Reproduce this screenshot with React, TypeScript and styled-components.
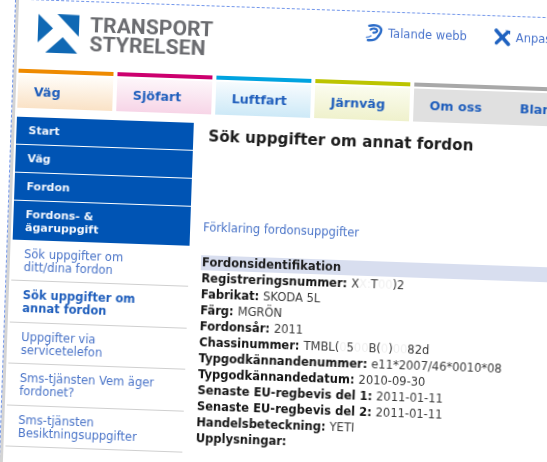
import React from "react";
import styled, { createGlobalStyle } from "styled-components";

const Global = createGlobalStyle`
  html, body { margin: 0; padding: 0; background: #fff; overflow: hidden; }
  body { width: 547px; height: 462px; font-family: "DejaVu Sans", Verdana, sans-serif; }
`;

const Viewport = styled.div`
  width: 547px;
  height: 462px;
  overflow: hidden;
  position: relative;
  background: #fff;
`;

const Tilted = styled.div`
  width: 620px;
  height: 560px;
  box-sizing: border-box;
  margin-top: -2px;
  margin-left: 16px;
  position: relative;
  transform-origin: -16px 2px;
  transform: rotate(2deg);
  filter: blur(0.45px);
  background: #fff;
  border-left: 3px solid #d4d4d4;
  border-top: 1px dashed #6f94ea;
  padding-left: 2px;
  &::before {
    content: "";
    position: absolute;
    left: -4px;
    top: 0;
    bottom: 0;
    border-left: 1px dashed #6f94ea;
  }
`;

const Header = styled.header`
  height: 69px;
  position: relative;
  display: flex;
  align-items: flex-start;
`;

const LogoBlock = styled.div`
  display: flex;
  align-items: flex-start;
  gap: 10px;
  padding: 13px 0 0 18px;
  width: 345px;
  box-sizing: border-box;
`;

const LogoWord = styled.div`
  font-family: Roboto, "Liberation Sans", Arial, sans-serif;
  font-weight: 700;
  font-size: 21px;
  line-height: 19px;
  letter-spacing: 0.1px;
  color: #6b6c70;
  padding-top: 1px;
`;

const ToolLinks = styled.nav`
  display: flex;
  gap: 26px;
  padding-top: 12px;
  white-space: nowrap;
`;

const ToolLink = styled.span`
  display: inline-flex;
  align-items: center;
  gap: 5px;
  font-size: 11.5px;
  color: #4a74cc;
`;

const Tabs = styled.div`
  display: flex;
  gap: 4px;
  height: 39px;
`;

const Tab = styled.div<{ $bar: string; $fill: string; $wide?: boolean }>`
  width: ${(p) => (p.$wide ? "260px" : "95px")};
  flex: none;
  display: flex;
  flex-direction: column;
  gap: 2px;
  &::before {
    content: "";
    height: 4px;
    background: ${(p) => p.$bar};
  }
  & > div {
    flex: 1;
    display: flex;
    gap: 38px;
    align-items: center;
    padding-left: 16px;
    font-size: 12.7px;
    font-weight: 700;
    color: #1f5ebc;
    background: ${(p) => p.$fill};
  }
`;

const Body = styled.div`
  display: flex;
  margin-top: 9px;
`;

const Sidebar = styled.aside`
  width: 177px;
  flex: none;
`;

const MainNav = styled.div`
  display: flex;
  flex-direction: column;
  gap: 1px;
`;

const MainItem = styled.div<{ $double?: boolean }>`
  background: #0054b4;
  color: #f2f6fc;
  font-weight: 700;
  font-size: 11px;
  line-height: ${(p) => (p.$double ? "13px" : "14px")};
  padding: 7px 12px 6px;
`;

const SubItem = styled.div<{ $active?: boolean }>`
  height: 41.4px;
  box-sizing: border-box;
  padding: 8px 6px 0 12px;
  border-bottom: 1px solid #cfcfcf;
  font-size: 11.5px;
  line-height: 13px;
  color: ${(p) => (p.$active ? "#1f5ebc" : "#4a74c8")};
  font-weight: ${(p) => (p.$active ? 700 : 400)};
`;

const Main = styled.main`
  margin-left: 15px;
  flex: 1;
`;

const Title = styled.h1`
  margin: 3px 0 0;
  font-size: 15.2px;
  line-height: 20px;
  font-weight: 700;
  color: #1c1c1c;
`;

const Explain = styled.a`
  display: block;
  margin-top: 74px;
  margin-left: -2px;
  font-size: 11.45px;
  line-height: 14px;
  color: #4a74c8;
`;

const Section = styled.div`
  margin: 21px 0 0 -3px;
  background: #d8deef;
  height: 15px;
  font-size: 11.5px;
  line-height: 15px;
  font-weight: 700;
  color: #1c1c1c;
  padding-left: 1px;
`;

const Row = styled.div`
  height: 16px;
  font-size: 11.5px;
  line-height: 16px;
  color: #3a3a3a;
  margin-left: -3px;
  padding-left: 1px;
  white-space: nowrap;
  & b {
    color: #141414;
    margin-right: 4px;
  }
`;

const Faint = styled.span`
  color: #f0f0f0;
`;

const EarIcon = () => (
  <svg width="18" height="18" viewBox="0 0 18 18" fill="none">
    <path d="M4 1.8C8 .8 14 .8 15.8 4.5c1.4 3.5-1.6 5.8-3 8.2-1.3 2.4-4.5 3.8-9.8 3.6" stroke="#2a6bc8" strokeWidth="2.4" strokeLinecap="round" />
    <path d="M5.5 5.5c2-1.5 6-1.3 6.5.8.3 1.7-1.6 2.4-3.6 2.4" stroke="#2a6bc8" strokeWidth="2.2" strokeLinecap="round" />
    <path d="M1.5 13.5c1.5-.2 3-.6 4.5-1.5" stroke="#6e9ae0" strokeWidth="1.5" strokeLinecap="round" />
  </svg>
);

const ToolIcon = () => (
  <svg width="18" height="18" viewBox="0 0 18 18" fill="none">
    <path d="M3 2l12.5 13.5" stroke="#1f62c0" strokeWidth="3.6" strokeLinecap="round" />
    <path d="M14.5 3.5l-11 11" stroke="#1f62c0" strokeWidth="3.2" strokeLinecap="round" />
    <path d="M12 1.5l5 .5v4z" fill="#1f62c0" />
  </svg>
);

const LogoMark = () => (
  <svg width="42" height="40" viewBox="0 0 42 40" style={{ flex: "none" }}>
    <path d="M0 0.5L15 14.5L0 29Z" fill="#0f68b4" />
    <path d="M19 0L41 0.5V22Z" fill="#0f68b4" />
    <path d="M8 39L25 23L40 39Z" fill="#0f68b4" />
  </svg>
);

const rows: [string, React.ReactNode][] = [
  ["Registreringsnummer:", <>X<Faint>X:</Faint>T<Faint>00</Faint>)2</>],
  ["Fabrikat:", "SKODA 5L"],
  ["Färg:", "MGRÖN"],
  ["Fordonsår:", "2011"],
  ["Chassinummer:", <>TMBL(<Faint>0</Faint>5<Faint>00</Faint>B(<Faint>0</Faint>)<Faint>00</Faint>82d</>],
  ["Typgodkännandenummer:", "e11*2007/46*0010*08"],
  ["Typgodkännandedatum:", "2010-09-30"],
  ["Senaste EU-regbevis del 1:", "2011-01-11"],
  ["Senaste EU-regbevis del 2:", "2011-01-11"],
  ["Handelsbeteckning:", "YETI"],
  ["Upplysningar:", ""],
];

export default function App() {
  return (
    <Viewport>
      <Global />
      <Tilted>
        <Header>
          <LogoBlock>
            <LogoMark />
            <LogoWord>TRANSPORT<br />STYRELSEN</LogoWord>
          </LogoBlock>
          <ToolLinks>
            <ToolLink><EarIcon />Talande webb</ToolLink>
            <ToolLink><ToolIcon />Anpassa webben</ToolLink>
          </ToolLinks>
        </Header>
        <Tabs>
          <Tab $bar="#ee8a00" $fill="linear-gradient(#fffdf9,#fae2c6)"><div>Väg</div></Tab>
          <Tab $bar="#cc006e" $fill="linear-gradient(#fdf6fa,#f7d5e7)"><div>Sjöfart</div></Tab>
          <Tab $bar="#00a3e0" $fill="linear-gradient(#f6fbfe,#cde9f7)"><div>Luftfart</div></Tab>
          <Tab $bar="#bcc400" $fill="linear-gradient(#fbfcee,#eff1cc)"><div>Järnväg</div></Tab>
          <Tab $bar="#a8a8a8" $fill="#e0e0e0" $wide><div>Om oss<span>Blanketter</span></div></Tab>
        </Tabs>
        <Body>
          <Sidebar>
            <MainNav>
              <MainItem>Start</MainItem>
              <MainItem>Väg</MainItem>
              <MainItem>Fordon</MainItem>
              <MainItem $double>Fordons- &amp;<br />ägaruppgift</MainItem>
            </MainNav>
            <SubItem>Sök uppgifter om<br />ditt/dina fordon</SubItem>
            <SubItem $active>Sök uppgifter om<br />annat fordon</SubItem>
            <SubItem>Uppgifter via<br />servicetelefon</SubItem>
            <SubItem>Sms-tjänsten Vem äger<br />fordonet?</SubItem>
            <SubItem>Sms-tjänsten<br />Besiktningsuppgifter</SubItem>
          </Sidebar>
          <Main>
            <Title>Sök uppgifter om annat fordon</Title>
            <Explain>Förklaring fordonsuppgifter</Explain>
            <Section>Fordonsidentifikation</Section>
            {rows.map(([label, value]) => (
              <Row key={label}><b>{label}</b>{value}</Row>
            ))}
          </Main>
        </Body>
      </Tilted>
    </Viewport>
  );
}
